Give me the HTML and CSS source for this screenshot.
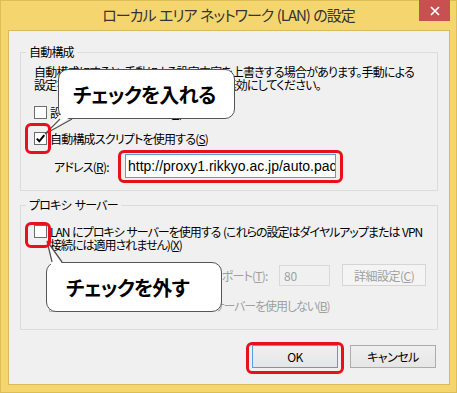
FILE: index.html
```html
<!DOCTYPE html>
<html lang="ja">
<head>
    <meta charset="UTF-8">
    <title>ローカル エリア ネットワーク (LAN) の設定</title>
    <link rel="stylesheet" href="styles.css">
</head>
<body>

<div class="window">
    <div class="titlebar">
        <span class="title">ローカル エリア ネットワーク (LAN) の設定</span>
        <span class="close">
            <svg width="10" height="10" viewBox="0 0 10 10"><path d="M1 1 L9 9 M9 1 L1 9" stroke="#fff" stroke-width="1.7"/></svg>
        </span>
    </div>

    <div class="client">
        <fieldset class="group group-auto">
            <legend>自動構成</legend>
            <p class="desc">自動構成にすると、手動による設定内容を上書きする場合があります。手動による<br>設定を確実に使用するには、自動構成を無効にしてください。</p>
            <label class="check row-detect"><span class="box"></span>設定を自動的に検出する(<u>A</u>)</label>
            <label class="check row-script">
                <span class="box">
                    <svg width="11" height="11" viewBox="0 0 11 11"><path d="M1.8 5.6 L4.3 8.3 L9.3 2.2" fill="none" stroke="#000" stroke-width="2"/></svg>
                </span>自動構成スクリプトを使用する(<u>S</u>)
            </label>
            <div class="addr-row">
                <span class="field-label">アドレス(<u>R</u>):</span>
                <div class="textbox focused">http://proxy1.rikkyo.ac.jp/auto.pac</div>
            </div>
        </fieldset>

        <fieldset class="group group-proxy">
            <legend>プロキシ サーバー</legend>
            <label class="check check-wrap"><span class="box"></span><span>LAN にプロキシ サーバーを使用する (これらの設定はダイヤルアップまたは VPN<br>接続には適用されません)(<u>X</u>)</span></label>
            <div class="proxy-row disabled">
                <span class="field-label">アドレス(<u>E</u>):</span>
                <div class="textbox proxy-addr"></div>
                <span class="port-label">ポート(<u>T</u>):</span>
                <div class="textbox port">80</div>
                <button class="btn btn-advanced">詳細設定(<u>C</u>)</button>
            </div>
            <label class="check bypass disabled"><span class="box"></span>ローカル アドレスにはプロキシ サーバーを使用しない(<u>B</u>)</label>
        </fieldset>

        <div class="actions">
            <button class="btn btn-default">OK</button>
            <button class="btn">キャンセル</button>
        </div>
    </div>

    <!-- annotations -->
    <div class="callout callout-on">チェックを入れる</div>
    <svg class="tail tail-on" width="40" height="30" viewBox="0 0 40 30">
        <polygon points="19,5 33,5 5,24" fill="#fff"/>
        <polyline points="20,9 5,24 32,9" fill="none" stroke="#555" stroke-width="1.3"/>
    </svg>

    <div class="callout callout-off">チェックを外す</div>
    <svg class="tail tail-off" width="30" height="32" viewBox="0 0 30 32">
        <polygon points="7,6 11,30 23,30" fill="#fff"/>
        <polyline points="12,27 7,6 22,27" fill="none" stroke="#555" stroke-width="1.3"/>
    </svg>

    <span class="mark mark-script"></span>
    <span class="mark mark-url"></span>
    <span class="mark mark-proxy"></span>
    <span class="mark mark-ok"></span>
</div>

</body>
</html>
```

FILE: styles.css
```css
body {
    margin: 0;
    font-family: "Noto Sans CJK JP", sans-serif;
    font-size: 12px;
    font-feature-settings: "palt";
    letter-spacing: -0.8px;
    word-spacing: 2px;
    color: #000;
}
.window {
    position: relative;
    width: 457px;
    height: 393px;
    background: #f5d66e;
    box-shadow: inset 0 0 0 1px #dcbd57;
    overflow: hidden;
}
.titlebar {
    height: 30px;
    display: flex;
    align-items: center;
    justify-content: center;
}
.title {
    font-size: 15px;
    letter-spacing: -1px;
    word-spacing: 1px;
    color: #333;
    line-height: 30px;
}
.close {
    position: absolute;
    top: 0;
    right: 7px;
    width: 31px;
    height: 21px;
    background: #c75050;
    display: flex;
    align-items: center;
    justify-content: center;
}
.client {
    margin: 0 7px 0 8px;
    height: 355px;
    box-sizing: border-box;
    background: #f0f0f0;
    border: 1px solid #d7bb5e;
    padding: 14px 11px 0 11px;
}
.group {
    margin: 0;
    padding: 0 11px 12px 13px;
    border: 1px solid #dcdcdc;
    min-width: 0;
}
.group legend {
    padding: 0 3px;
    margin-left: -8px;
    line-height: 14px;
}
.group-proxy {
    margin-top: 7px;
    padding-bottom: 16px;
}
.desc {
    margin: 6px 0 0;
    line-height: 13px;
    white-space: nowrap;
}
.check {
    display: flex;
    align-items: center;
    height: 16px;
    white-space: nowrap;
}
.box {
    width: 13px;
    height: 13px;
    box-sizing: border-box;
    border: 1px solid #6d6d6d;
    background: #fff;
    margin-right: 3px;
    flex: none;
    display: flex;
    align-items: center;
    justify-content: center;
}
.row-detect {
    margin-top: 13px;
}
.row-script {
    margin-top: 10px;
}
.addr-row {
    margin-top: 8px;
    display: flex;
    align-items: center;
    padding-left: 20px;
}
.addr-row .field-label {
    width: 71px;
}
.textbox {
    box-sizing: border-box;
    height: 24px;
    border: 1px solid #abadb3;
    background: #fff;
    padding: 0 2px;
    font-family: "Liberation Sans", sans-serif;
    font-size: 14px;
    letter-spacing: 0;
    word-spacing: 0;
    line-height: 22px;
    white-space: nowrap;
    overflow: hidden;
}
.textbox.focused {
    width: 211px;
    border-color: #569de5;
}
.check-wrap {
    height: auto;
    align-items: flex-start;
    margin-top: 13px;
    line-height: 13px;
    letter-spacing: -1px;
    word-spacing: 1px;
}
.proxy-row {
    margin-top: 13px;
    display: flex;
    align-items: center;
    padding-left: 20px;
    height: 22px;
    white-space: nowrap;
}
.proxy-row .field-label {
    width: 66px;
}
.proxy-row .textbox {
    height: 21px;
    background: #f0f0f0;
    border-color: #d9d9d9;
    color: #a0a0a0;
    font-family: "Noto Sans CJK JP", sans-serif;
    font-size: 12px;
    line-height: 19px;
    padding: 0 4px;
}
.proxy-addr {
    width: 94px;
}
.port-label {
    margin-left: 10px;
    width: 58px;
}
.port {
    width: 52px;
}
.disabled {
    color: #a0a0a0;
}
.disabled .box {
    border-color: #bcbcbc;
    background: #f4f4f4;
}
.bypass {
    margin-top: 11px;
    padding-left: 15px;
    letter-spacing: -1.1px;
}
.btn {
    box-sizing: border-box;
    height: 23px;
    width: 86px;
    border: 1px solid #acacac;
    background: linear-gradient(#f0f0f0, #e5e5e5);
    font-family: "Noto Sans CJK JP", sans-serif;
    font-size: 12px;
    font-feature-settings: "palt";
    letter-spacing: -0.5px;
    color: #000;
    padding: 0;
}
.btn-advanced {
    margin-left: 12px;
    width: 85px;
    height: 22px;
    background: #f4f4f4;
    border-color: #d5d5d5;
    color: #a0a0a0;
}
.btn-default {
    border-color: #569de5;
}
.actions {
    margin-top: 15px;
    display: flex;
    justify-content: flex-end;
    gap: 12px;
    padding-right: 2px;
}
.callout {
    position: absolute;
    box-sizing: border-box;
    height: 50px;
    background: #fff;
    border: 1.5px solid #555;
    border-radius: 10px;
    font-size: 20px;
    font-weight: bold;
    letter-spacing: -0.8px;
    display: flex;
    align-items: center;
}
.callout-on {
    left: 58px;
    top: 69px;
    width: 177px;
    padding-left: 14px;
}
.callout-off {
    left: 46px;
    top: 262px;
    width: 176px;
    padding-left: 19px;
}
.tail {
    position: absolute;
}
.tail-on {
    left: 40px;
    top: 110px;
}
.tail-off {
    left: 40px;
    top: 235px;
}
.mark {
    position: absolute;
    box-sizing: border-box;
    border: 3px solid #e8101a;
    border-radius: 6px;
}
.mark-script {
    left: 25px;
    top: 123px;
    width: 26px;
    height: 31px;
}
.mark-url {
    left: 118px;
    top: 150px;
    width: 225px;
    height: 33px;
}
.mark-proxy {
    left: 25px;
    top: 222px;
    width: 26px;
    height: 26px;
}
.mark-ok {
    left: 246px;
    top: 342px;
    width: 98px;
    height: 32px;
}
```
